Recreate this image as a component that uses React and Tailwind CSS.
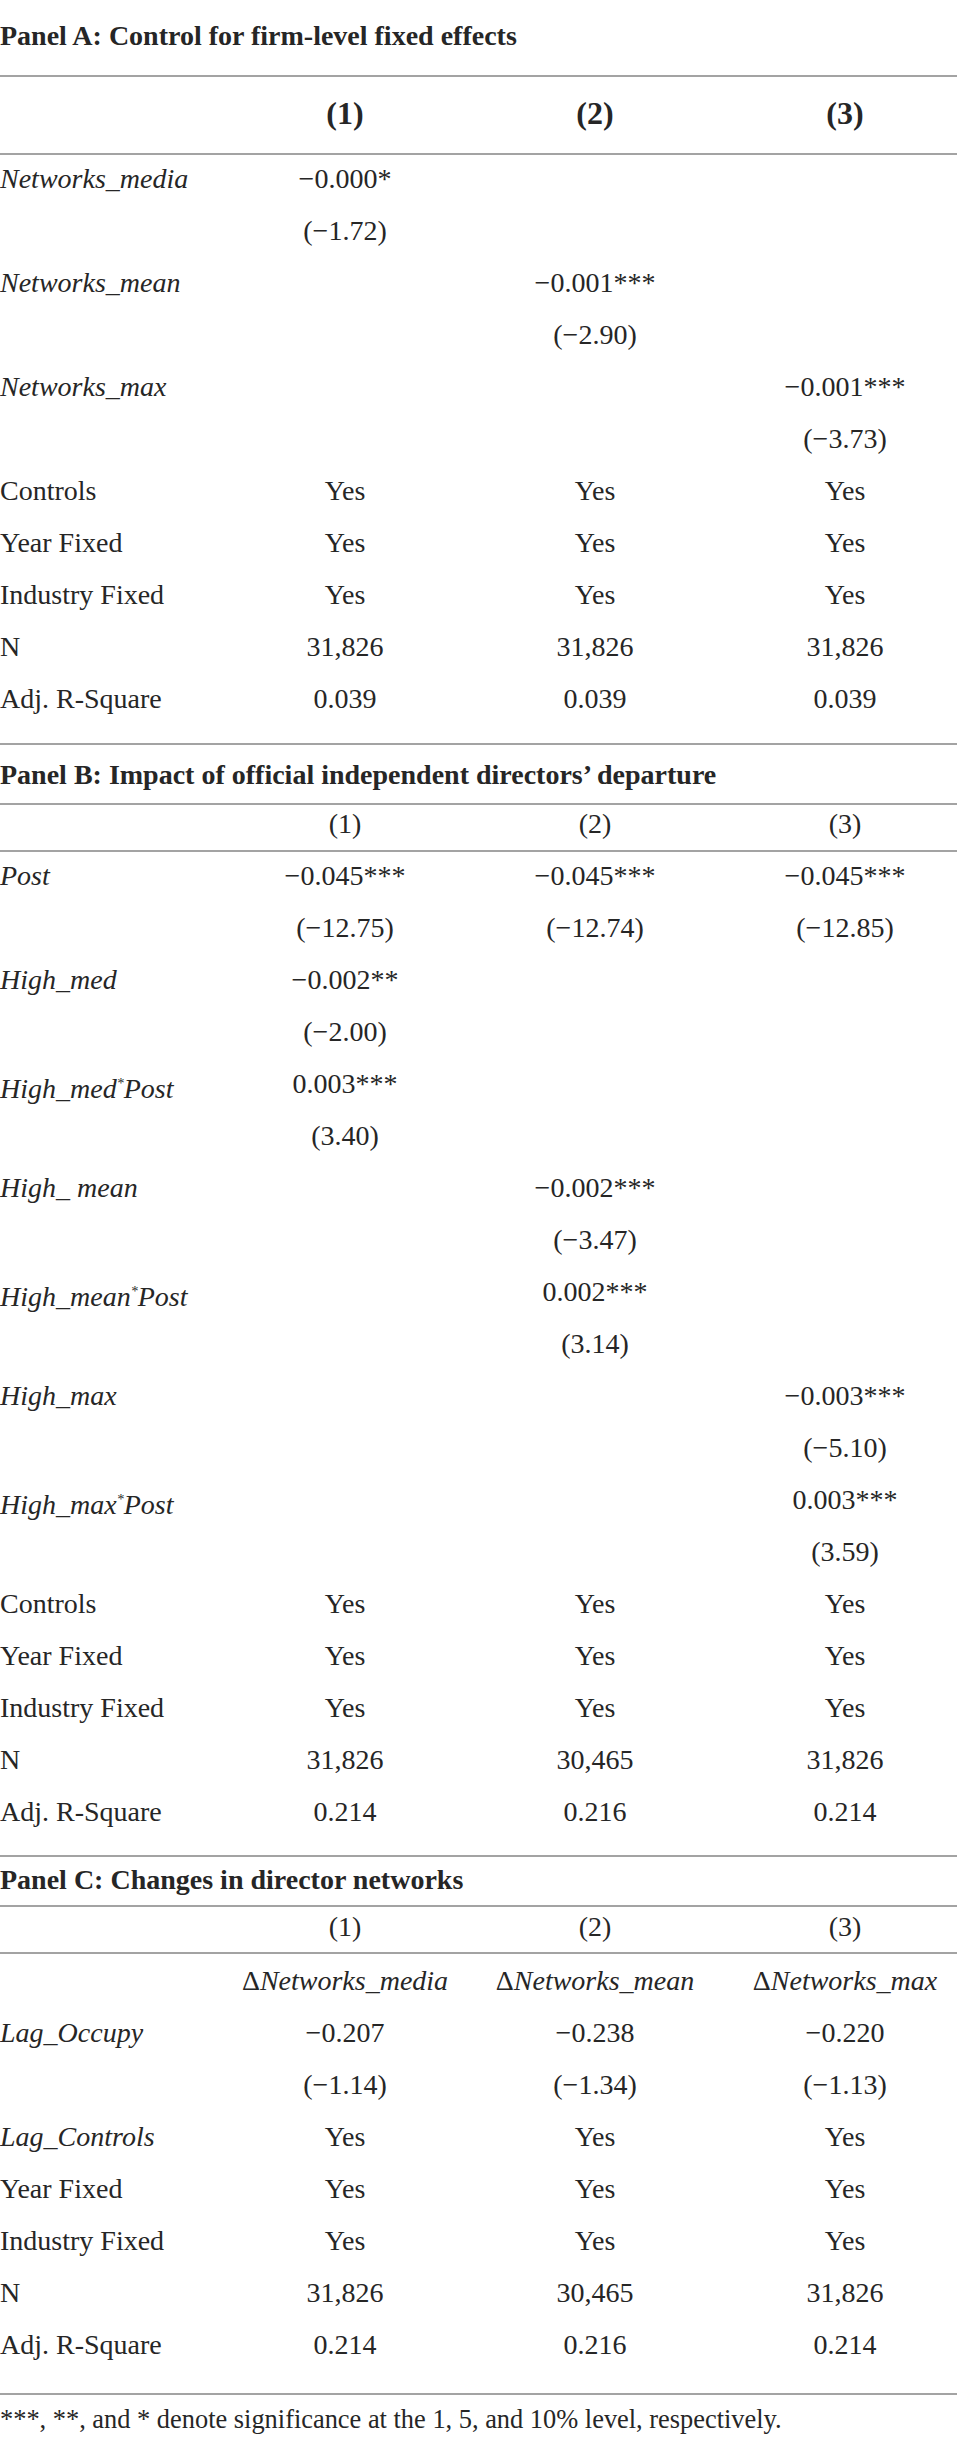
import React from "react";

const M = "\u2212";

const Star = () => <span className="text-[14px] align-[10px]">*</span>;

const panelA = [
  { label: "Networks_media", italic: true, cells: [`${M}0.000*`, "", ""] },
  { label: "", cells: [`(${M}1.72)`, "", ""] },
  { label: "Networks_mean", italic: true, cells: ["", `${M}0.001***`, ""] },
  { label: "", cells: ["", `(${M}2.90)`, ""] },
  { label: "Networks_max", italic: true, cells: ["", "", `${M}0.001***`] },
  { label: "", cells: ["", "", `(${M}3.73)`] },
  { label: "Controls", cells: ["Yes", "Yes", "Yes"] },
  { label: "Year Fixed", cells: ["Yes", "Yes", "Yes"] },
  { label: "Industry Fixed", cells: ["Yes", "Yes", "Yes"] },
  { label: "N", cells: ["31,826", "31,826", "31,826"] },
  { label: "Adj. R-Square", cells: ["0.039", "0.039", "0.039"] },
];

const panelB = [
  { label: "Post", italic: true, cells: [`${M}0.045***`, `${M}0.045***`, `${M}0.045***`] },
  { label: "", cells: [`(${M}12.75)`, `(${M}12.74)`, `(${M}12.85)`] },
  { label: "High_med", italic: true, cells: [`${M}0.002**`, "", ""] },
  { label: "", cells: [`(${M}2.00)`, "", ""] },
  { label: <>High_med<Star />Post</>, italic: true, cells: ["0.003***", "", ""] },
  { label: "", cells: ["(3.40)", "", ""] },
  { label: "High_ mean", italic: true, cells: ["", `${M}0.002***`, ""] },
  { label: "", cells: ["", `(${M}3.47)`, ""] },
  { label: <>High_mean<Star />Post</>, italic: true, cells: ["", "0.002***", ""] },
  { label: "", cells: ["", "(3.14)", ""] },
  { label: "High_max", italic: true, cells: ["", "", `${M}0.003***`] },
  { label: "", cells: ["", "", `(${M}5.10)`] },
  { label: <>High_max<Star />Post</>, italic: true, cells: ["", "", "0.003***"] },
  { label: "", cells: ["", "", "(3.59)"] },
  { label: "Controls", cells: ["Yes", "Yes", "Yes"] },
  { label: "Year Fixed", cells: ["Yes", "Yes", "Yes"] },
  { label: "Industry Fixed", cells: ["Yes", "Yes", "Yes"] },
  { label: "N", cells: ["31,826", "30,465", "31,826"] },
  { label: "Adj. R-Square", cells: ["0.214", "0.216", "0.214"] },
];

const panelC = [
  {
    label: "",
    cells: [
      <>Δ<i>Networks_media</i></>,
      <>Δ<i>Networks_mean</i></>,
      <>Δ<i>Networks_max</i></>,
    ],
  },
  { label: "Lag_Occupy", italic: true, cells: [`${M}0.207`, `${M}0.238`, `${M}0.220`] },
  { label: "", cells: [`(${M}1.14)`, `(${M}1.34)`, `(${M}1.13)`] },
  { label: "Lag_Controls", italic: true, cells: ["Yes", "Yes", "Yes"] },
  { label: "Year Fixed", cells: ["Yes", "Yes", "Yes"] },
  { label: "Industry Fixed", cells: ["Yes", "Yes", "Yes"] },
  { label: "N", cells: ["31,826", "30,465", "31,826"] },
  { label: "Adj. R-Square", cells: ["0.214", "0.216", "0.214"] },
];

function Rule() {
  return <div className="h-[2px] bg-[#a3a3a3]" />;
}

function Row({ label, italic, cells, className = "h-[52px] leading-[48px]" }) {
  return (
    <div className={`grid grid-cols-[220px_250px_250px_237px] whitespace-nowrap ${className}`}>
      <div className={italic ? "italic" : ""}>{label}</div>
      <div className="text-center">{cells[0]}</div>
      <div className="text-center">{cells[1]}</div>
      <div className="pl-[13px] text-center">{cells[2]}</div>
    </div>
  );
}

function Body({ rows }) {
  return (
    <div>
      {rows.map((r, i) => (
        <Row key={i} {...r} />
      ))}
    </div>
  );
}

export default function App() {
  return (
    <div className="w-[957px] bg-white font-['Liberation_Serif',serif] text-[28px] text-[#262626]">
      {/* Panel A */}
      <div className="h-[75px] pt-[18px] font-bold leading-[36px]">
        Panel A: Control for firm-level fixed effects
      </div>
      <Rule />
      <Row
        cells={["(1)", "(2)", "(3)"]}
        className="h-[76px] text-[32px] font-bold leading-[72px]"
      />
      <Rule />
      <Body rows={panelA} />
      <div className="h-[16px]" />
      <Rule />

      {/* Panel B */}
      <div className="h-[58px] pt-[12px] font-bold leading-[36px]">
        Panel B: Impact of official independent directors’ departure
      </div>
      <Rule />
      <Row cells={["(1)", "(2)", "(3)"]} className="h-[45px] leading-[38px]" />
      <Rule />
      <Body rows={panelB} />
      <div className="h-[15px]" />
      <Rule />

      {/* Panel C */}
      <div className="h-[48px] pt-[5px] font-bold leading-[36px]">
        Panel C: Changes in director networks
      </div>
      <Rule />
      <Row cells={["(1)", "(2)", "(3)"]} className="h-[45px] leading-[40px]" />
      <Rule />
      <div className="pt-[3px]">
        <Body rows={panelC} />
      </div>
      <div className="h-[20px]" />
      <Rule />

      <div className="pt-[6px] text-[26.4px] leading-[36px]">
        ***, **, and * denote significance at the 1, 5, and 10% level, respectively.
      </div>
    </div>
  );
}
